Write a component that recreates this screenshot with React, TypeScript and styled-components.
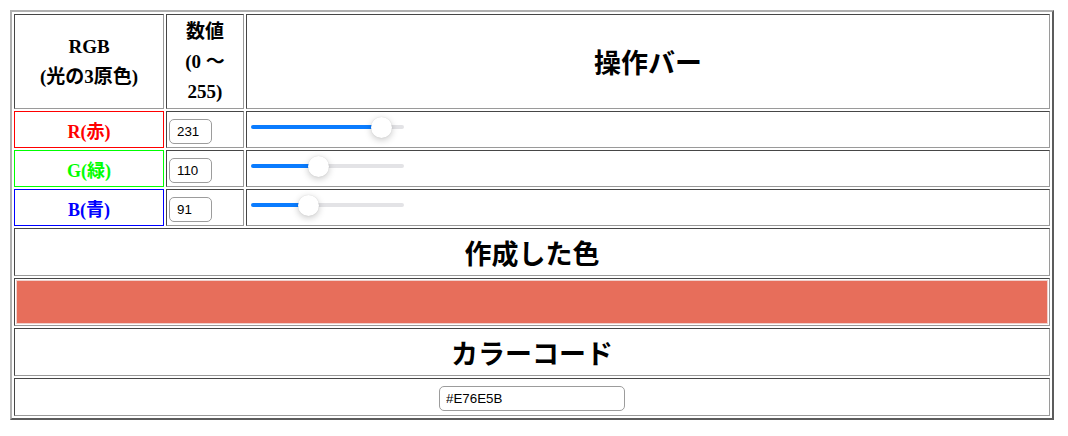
import { useState } from "react";
import styled, { createGlobalStyle } from "styled-components";

const GlobalStyle = createGlobalStyle`
  html, body {
    margin: 0;
    padding: 0;
    background: #fff;
  }
  body {
    font-family: "Liberation Serif", "Noto Sans CJK JP", serif;
    color: #000;
  }
`;

const Page = styled.div`
  padding: 10px;
`;

const Table = styled.table`
  width: 1044px;
  border: 2px outset #b0b0b0;
  border-spacing: 2px;
  border-collapse: separate;
  table-layout: fixed;
`;

const Cell = styled.td<{ $h?: number }>`
  box-sizing: border-box;
  border: 1px inset #9a9a9a;
  padding: 1px;
  height: ${(p) => p.$h ?? 37}px;
  text-align: center;
  vertical-align: middle;
`;

const HeadCell = styled(Cell).attrs({ as: "th" })`
  font-size: 19px;
  line-height: 30px;
  font-weight: 700;
`;

const TitleCell = styled(Cell).attrs({ as: "th" })`
  font-size: 27px;
  font-weight: 700;
`;

const LabelCell = styled(Cell)<{ $color: string }>`
  border: 1px solid ${(p) => p.$color};
  color: ${(p) => p.$color};
  font-size: 18px;
  font-weight: 700;
`;

const NumCell = styled(Cell)`
  text-align: left;
  padding: 1px 2px;
`;

const SliderCell = styled(Cell)`
  text-align: left;
  padding: 1px 4px;
`;

const NumBox = styled.input`
  box-sizing: border-box;
  width: 43px;
  height: 25px;
  margin-top: 3px;
  padding: 1px 7px;
  border: 1px solid #9c9c9c;
  border-radius: 5px;
  font-family: "Liberation Sans", Arial, sans-serif;
  font-size: 13.33px;
  color: #000;
  background: #fff;
  -moz-appearance: textfield;
  &::-webkit-outer-spin-button,
  &::-webkit-inner-spin-button {
    -webkit-appearance: none;
    margin: 0;
  }
`;

const Slider = styled.input<{ $fill: number }>`
  -webkit-appearance: none;
  appearance: none;
  display: block;
  width: 153px;
  height: 22px;
  margin: -5px 0 0 0;
  background: transparent;
  &::-webkit-slider-runnable-track {
    height: 4px;
    border-radius: 2px;
    background: linear-gradient(
      to right,
      #0a7cff ${(p) => p.$fill}%,
      #e3e3e6 ${(p) => p.$fill}%
    );
  }
  &::-webkit-slider-thumb {
    -webkit-appearance: none;
    width: 21px;
    height: 21px;
    margin-top: -8.5px;
    border-radius: 50%;
    background: #fff;
    box-shadow: 0 2px 7px rgba(0, 0, 0, 0.22), 0 0 1px rgba(0, 0, 0, 0.15);
  }
  &:focus {
    outline: none;
  }
`;

const Swatch = styled.div<{ $bg: string }>`
  height: 42px;
  background: ${(p) => p.$bg};
  border: 1px solid #f0d0cc;
`;

const HexBox = styled.input`
  box-sizing: border-box;
  width: 186px;
  height: 25px;
  margin-top: 3px;
  padding: 1px 6px;
  border: 1px solid #9c9c9c;
  border-radius: 5px;
  font-family: "Liberation Sans", Arial, sans-serif;
  font-size: 13.33px;
  color: #000;
  background: #fff;
`;

const channels = [
  { key: "r", label: "R(赤)", color: "#ff0000" },
  { key: "g", label: "G(緑)", color: "#00ff00" },
  { key: "b", label: "B(青)", color: "#0000ff" },
] as const;

type Key = (typeof channels)[number]["key"];

const toHex = (n: number) => n.toString(16).padStart(2, "0").toUpperCase();

export default function App() {
  const [rgb, setRgb] = useState<Record<Key, number>>({ r: 231, g: 110, b: 91 });

  const setChannel = (key: Key, v: string) => {
    const n = Math.max(0, Math.min(255, parseInt(v, 10) || 0));
    setRgb((prev) => ({ ...prev, [key]: n }));
  };

  const hex = `#${toHex(rgb.r)}${toHex(rgb.g)}${toHex(rgb.b)}`;

  // thumb is 21px wide, track 153px: fill ends at the thumb centre
  const fillOf = (v: number) => ((10.5 + (v / 255) * (153 - 21)) / 153) * 100;

  return (
    <Page>
      <GlobalStyle />
      <Table>
        <colgroup>
          <col style={{ width: 150 }} />
          <col style={{ width: 78 }} />
          <col />
        </colgroup>
        <tbody>
          <tr>
            <HeadCell $h={95}>
              RGB
              <br />
              (光の3原色)
            </HeadCell>
            <HeadCell $h={95}>
              数値
              <br />
              (0 ～
              <br />
              255)
            </HeadCell>
            <TitleCell $h={95}>操作バー</TitleCell>
          </tr>
          {channels.map((c) => (
            <tr key={c.key}>
              <LabelCell $color={c.color}>{c.label}</LabelCell>
              <NumCell>
                <NumBox
                  type="number"
                  min={0}
                  max={255}
                  value={rgb[c.key]}
                  onChange={(e) => setChannel(c.key, e.target.value)}
                />
              </NumCell>
              <SliderCell>
                <Slider
                  type="range"
                  min={0}
                  max={255}
                  value={rgb[c.key]}
                  $fill={fillOf(rgb[c.key])}
                  onChange={(e) => setChannel(c.key, e.target.value)}
                />
              </SliderCell>
            </tr>
          ))}
          <tr>
            <TitleCell colSpan={3} $h={48}>
              作成した色
            </TitleCell>
          </tr>
          <tr>
            <Cell colSpan={3} $h={48}>
              <Swatch $bg={hex} />
            </Cell>
          </tr>
          <tr>
            <TitleCell colSpan={3} $h={48}>
              カラーコード
            </TitleCell>
          </tr>
          <tr>
            <Cell colSpan={3} $h={38}>
              <HexBox type="text" value={hex} readOnly />
            </Cell>
          </tr>
        </tbody>
      </Table>
    </Page>
  );
}
